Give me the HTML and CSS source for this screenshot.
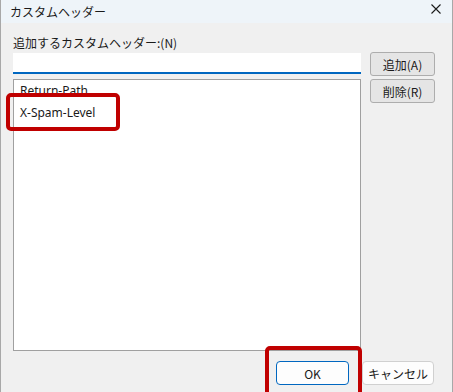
FILE: index.html
```html
<!DOCTYPE html>
<html lang="ja">
<head>
    <meta charset="UTF-8">
    <title>カスタムヘッダー</title>
    <link rel="stylesheet" href="styles.css">
</head>
<body>

    <div class="window">
        <div class="titlebar">
            <span class="title">カスタムヘッダー</span>
            <svg class="close" width="10" height="10" viewBox="0 0 10 10">
                <path d="M0.5 0.5 L9.5 9.5 M9.5 0.5 L0.5 9.5" stroke="#1a1a1a" stroke-width="1.1" fill="none"/>
            </svg>
        </div>

        <div class="content">
            <div class="label">追加するカスタムヘッダー:(N)</div>
            <div class="editor">
                <div class="left">
                    <div class="textbox"></div>
                    <ul class="listbox">
                        <li>Return-Path</li>
                        <li>X-Spam-Level</li>
                    </ul>
                </div>
                <div class="side">
                    <button class="btn">追加(A)</button>
                    <button class="btn">削除(R)</button>
                </div>
            </div>
        </div>

        <div class="footer">
            <button class="btn-dlg default">OK</button>
            <button class="btn-dlg">キャンセル</button>
        </div>

        <!-- 注目枠 -->
        <div class="mark mark-item"></div>
        <div class="mark mark-ok"></div>
    </div>

</body>
</html>
```

FILE: styles.css
```css
body {
    margin: 0;
    font-family: "Segoe UI", "Noto Sans", "Noto Sans CJK JP", sans-serif;
    font-size: 12px;
    color: #000;
}

.window {
    position: relative;
    width: 453px;
    height: 392px;
    box-sizing: border-box;
    background-color: #f0f0f0;
    border-left: 1px solid #a8a8a8;
    border-right: 1px solid #a8a8a8;
    overflow: hidden;
}

.titlebar {
    height: 23px;
    background-color: #eef4f9;
    display: flex;
    align-items: center;
    justify-content: space-between;
    padding: 0 11px 0 9px;
}

    .titlebar .title {
        font-family: "Noto Sans CJK JP", sans-serif;
        font-size: 12px;
        line-height: 1;
        color: #1a1a1a;
        padding-top: 1px;
    }

    .titlebar .close {
        margin-top: -5px;
    }

.content {
    padding: 13px 0 0 12px;
}

.label {
    font-family: "Noto Sans CJK JP", sans-serif;
    line-height: 14px;
    height: 17px;
    color: #1a1a1a;
}

.editor {
    display: flex;
    gap: 9px;
}

.left {
    width: 348px;
    display: flex;
    flex-direction: column;
    gap: 5px;
}

.textbox {
    height: 19px;
    background: white;
    border-bottom: 2px solid #0067c0;
}

.listbox {
    list-style: none;
    margin: 0;
    padding: 0 0 0 6px;
    height: 272px;
    box-sizing: border-box;
    background: white;
    border: 1px solid #a0a0a0;
}

    .listbox li {
        height: 22px;
        line-height: 22px;
        color: #1a1a1a;
    }

.side {
    display: flex;
    flex-direction: column;
    gap: 3px;
    margin-top: -1px;
}

.btn {
    width: 65px;
    height: 24px;
    padding: 0;
    background-color: #e5e5e5;
    border: 1px solid #adadad;
    border-radius: 3px;
    font-family: "Noto Sans CJK JP", sans-serif;
    font-size: 12px;
    color: #1a1a1a;
}

.footer {
    display: flex;
    justify-content: flex-end;
    gap: 13px;
    padding: 10px 18px 0 0;
}

.btn-dlg {
    width: 72px;
    height: 24px;
    padding: 0;
    background-color: #fdfdfd;
    border: 1px solid #d0d0d0;
    border-radius: 4px;
    font-family: "Noto Sans CJK JP", sans-serif;
    font-size: 12px;
    color: #1a1a1a;
}

    .btn-dlg.default {
        width: 73px;
        border-color: #0067c0;
    }

.mark {
    position: absolute;
    border: 4px solid #c00000;
    border-radius: 5px;
    box-sizing: border-box;
}

.mark-item {
    left: 5px;
    top: 93px;
    width: 114px;
    height: 38px;
}

.mark-ok {
    left: 264px;
    top: 346px;
    width: 97px;
    height: 52px;
}
```
